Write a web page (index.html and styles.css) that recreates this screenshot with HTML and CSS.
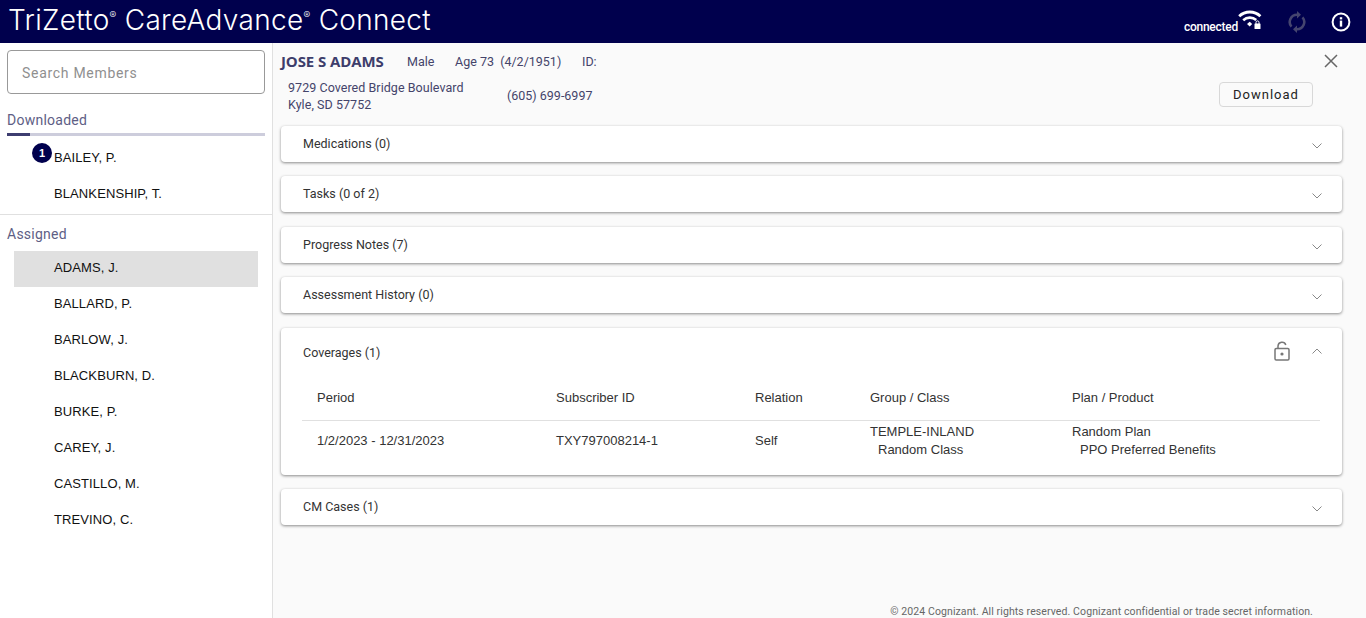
FILE: index.html
```html
<!DOCTYPE html>
<html lang="en">
<head>
  <meta charset="UTF-8">
  <title>TriZetto CareAdvance Connect</title>
  <link rel="stylesheet" href="styles.css">
</head>
<body>
  <header class="topbar">
    <div class="brand">TriZetto<sup>®</sup> CareAdvance<sup>®</sup> Connect</div>
    <div class="status">
      <span class="status-text">connected</span>
      <svg class="wifi" width="24" height="20" viewBox="0 0 24 20">
        <path d="M1.2 7.2C7 1.6 16.6 1.6 22.4 7.2" fill="none" stroke="#fff" stroke-width="2.8"/>
        <path d="M5.2 11.2C9 7.8 14.6 7.8 18.2 11" fill="none" stroke="#fff" stroke-width="2.6"/>
        <path d="M9 15L11.7 12.8L14.2 15L11.7 17.5Z" fill="#fff"/>
        <rect x="16.5" y="14.5" width="6" height="5.5" rx="0.6" fill="#fff"/>
        <path d="M18 15v-1.6a1.5 1.5 0 0 1 3 0V15" fill="none" stroke="#fff" stroke-width="1"/>
      </svg>
    </div>
    <svg class="sync" width="18" height="22" viewBox="0 0 18 22">
      <path d="M9 2.5V0l4 3.8L9 7.5V5a6 6 0 0 0-4.6 9.8L2.6 16.6A8.5 8.5 0 0 1 9 2.5Z" fill="#45456f"/>
      <path d="M9 19.5V22l-4-3.8L9 14.5V17a6 6 0 0 0 4.6-9.8l1.8-1.8A8.5 8.5 0 0 1 9 19.5Z" fill="#45456f"/>
    </svg>
    <svg class="info" width="20" height="20" viewBox="0 0 20 20">
      <circle cx="10" cy="10" r="8.4" fill="none" stroke="#fff" stroke-width="2"/>
      <rect x="8.8" y="8.6" width="2.4" height="6" fill="#fff"/>
      <rect x="8.8" y="5.2" width="2.4" height="2.2" fill="#fff"/>
    </svg>
  </header>

  <div class="layout">
    <aside class="sidebar">
      <div class="search">Search Members</div>
      <div class="tab-label">Downloaded</div>
      <div class="tab-bar"><div class="tab-progress"></div></div>
      <ul class="members">
        <li class="member"><span class="badge">1</span>BAILEY, P.</li>
        <li class="member">BLANKENSHIP, T.</li>
      </ul>
      <div class="divider"></div>
      <div class="group-label">Assigned</div>
      <ul class="members">
        <li class="member selected">ADAMS, J.</li>
        <li class="member">BALLARD, P.</li>
        <li class="member">BARLOW, J.</li>
        <li class="member">BLACKBURN, D.</li>
        <li class="member">BURKE, P.</li>
        <li class="member">CAREY, J.</li>
        <li class="member">CASTILLO, M.</li>
        <li class="member">TREVINO, C.</li>
      </ul>
    </aside>

    <main class="content">
      <div class="patient-top">
        <span class="patient-name">JOSE S ADAMS</span>
        <span class="patient-sex">Male</span>
        <span class="patient-age">Age 73&nbsp; (4/2/1951)</span>
        <span class="patient-id">ID:</span>
        <svg class="close" width="14" height="14" viewBox="0 0 14 14">
          <path d="M1 1L13 13M13 1L1 13" stroke="#666" stroke-width="1.5" fill="none"/>
        </svg>
      </div>
      <div class="patient-bottom">
        <div class="address">9729 Covered Bridge Boulevard<br>Kyle, SD 57752</div>
        <div class="phone">(605) 699-6997</div>
        <button class="download">Download</button>
      </div>

      <section class="card">
        <div class="card-head">Medications (0)<svg class="chev" width="10" height="6" viewBox="0 0 10 6"><path d="M.5.5L5 5 9.5.5" fill="none" stroke="#888"/></svg></div>
      </section>
      <section class="card">
        <div class="card-head">Tasks (0 of 2)<svg class="chev" width="10" height="6" viewBox="0 0 10 6"><path d="M.5.5L5 5 9.5.5" fill="none" stroke="#888"/></svg></div>
      </section>
      <section class="card">
        <div class="card-head">Progress Notes (7)<svg class="chev" width="10" height="6" viewBox="0 0 10 6"><path d="M.5.5L5 5 9.5.5" fill="none" stroke="#888"/></svg></div>
      </section>
      <section class="card">
        <div class="card-head">Assessment History (0)<svg class="chev" width="10" height="6" viewBox="0 0 10 6"><path d="M.5.5L5 5 9.5.5" fill="none" stroke="#888"/></svg></div>
      </section>
      <section class="card">
        <div class="card-head open">
          Coverages (1)
          <svg class="lock" width="16" height="20" viewBox="0 0 16 20">
            <rect x="1" y="7.5" width="14" height="11.5" rx="1.2" fill="none" stroke="#777" stroke-width="1.5"/>
            <path d="M4 7.5V5a4 4 0 0 1 7.8-1" fill="none" stroke="#777" stroke-width="1.5"/>
            <circle cx="8" cy="13" r="1.6" fill="#777"/>
          </svg>
          <svg class="chev up" width="10" height="6" viewBox="0 0 10 6"><path d="M.5 5.5L5 1l4.5 4.5" fill="none" stroke="#888"/></svg>
        </div>
        <div class="cov-table">
          <div class="cov-row cov-header">
            <div class="c1">Period</div>
            <div class="c2">Subscriber ID</div>
            <div class="c3">Relation</div>
            <div class="c4">Group / Class</div>
            <div class="c5">Plan / Product</div>
          </div>
          <div class="cov-row cov-data">
            <div class="c1">1/2/2023 - 12/31/2023</div>
            <div class="c2">TXY797008214-1</div>
            <div class="c3">Self</div>
            <div class="c4">TEMPLE-INLAND<br><span class="sub">Random Class</span></div>
            <div class="c5">Random Plan<br><span class="sub">PPO Preferred Benefits</span></div>
          </div>
        </div>
      </section>
      <section class="card">
        <div class="card-head">CM Cases (1)<svg class="chev" width="10" height="6" viewBox="0 0 10 6"><path d="M.5.5L5 5 9.5.5" fill="none" stroke="#888"/></svg></div>
      </section>

      <footer class="copyright">© 2024 Cognizant. All rights reserved. Cognizant confidential or trade secret information.</footer>
    </main>
  </div>
</body>
</html>
```

FILE: styles.css
```css
* {
  box-sizing: border-box;
}
html, body {
  height: 100%;
}
body {
  margin: 0;
  overflow: hidden;
  font-family: Roboto, "Liberation Sans", sans-serif;
  font-size: 14px;
  color: #333;
  background: #fff;
}
ul {
  list-style: none;
  margin: 0;
  padding: 0;
}

/* top bar */
.topbar {
  height: 43px;
  background: #00004d;
  display: flex;
  align-items: center;
  color: #fff;
  padding: 0 15px 0 8px;
}
.brand {
  font-family: Inter, sans-serif;
  font-weight: 300;
  font-size: 28px;
  letter-spacing: 0.3px;
  white-space: nowrap;
  margin-top: -3px;
}
.brand sup {
  font-size: 10px;
  line-height: 0;
  vertical-align: 11px;
}
.status {
  margin-left: auto;
  display: flex;
  align-items: flex-start;
  margin-right: 26px;
}
.status-text {
  font-size: 12px;
  font-weight: 500;
  letter-spacing: -0.25px;
  margin-top: 11px;
}
.wifi {
  margin-bottom: 6px;
}
.sync {
  margin-right: 25px;
}

/* left column */
.layout {
  display: flex;
  height: 575px;
}
.sidebar {
  width: 273px;
  flex: none;
  border-right: 1px solid #e0e0e0;
  padding-top: 7px;
  background: #fff;
}
.search {
  margin: 0 7px;
  height: 44px;
  border: 1px solid #999;
  border-radius: 4px;
  padding: 0 14px;
  line-height: 45px;
  color: #8f8f8f;
  letter-spacing: 0.7px;
}
.tab-label {
  margin: 18px 7px 0;
  line-height: 16px;
  color: #5e5e85;
  letter-spacing: 0.25px;
}
.tab-bar {
  margin: 5px 7px 0;
  height: 3px;
  background: #cdcddc;
}
.tab-progress {
  width: 23px;
  height: 3px;
  background: #3d3d70;
}
.members {
  padding-top: 4px;
}
.member {
  position: relative;
  height: 36px;
  line-height: 36px;
  margin: 0 14px;
  padding-left: 40px;
  font-family: "Liberation Sans", sans-serif;
  font-size: 13px;
  letter-spacing: 0.1px;
  color: #111;
}
.member.selected {
  background: #e0e0e0;
}
.badge {
  position: absolute;
  left: 18px;
  top: 3px;
  width: 20px;
  height: 20px;
  border-radius: 50%;
  background: #00004d;
  color: #fff;
  font-size: 11px;
  font-weight: 700;
  line-height: 20px;
  text-align: center;
}
.divider {
  margin-top: 2px;
  height: 1px;
  background: #e0e0e0;
}
.group-label {
  margin: 11px 7px 0;
  line-height: 16px;
  color: #5e5e85;
  letter-spacing: 0.25px;
}
.group-label + .members {
  padding-top: 9px;
}
.group-label + .members .member {
  line-height: 34px;
}

/* right column */
.content {
  flex: 1;
  display: flex;
  flex-direction: column;
  background: #fafafa;
  padding: 0 24px 0 8px;
}
.patient-top {
  display: flex;
  align-items: center;
  height: 36px;
  font-size: 12.5px;
  color: #44446a;
}
.patient-name {
  font-family: "Open Sans", sans-serif;
  font-weight: 700;
  font-size: 15px;
  color: #3d3d6b;
  letter-spacing: -0.1px;
  width: 126px;
}
.patient-sex {
  width: 48px;
}
.patient-age {
  width: 127px;
}
.close {
  margin-left: auto;
  margin-right: 4px;
  margin-top: -1px;
}
.patient-bottom {
  display: flex;
  font-size: 12.5px;
  color: #44446a;
  height: 47px;
  padding-left: 7px;
  line-height: 17px;
}
.address {
  width: 219px;
  letter-spacing: 0.05px;
}
.phone {
  padding-top: 8px;
}
.download {
  margin-left: auto;
  margin-right: 29px;
  margin-top: 3px;
  width: 94px;
  height: 25px;
  background: #fafafa;
  border: 1px solid #d8d8d8;
  border-radius: 4px;
  font-family: Roboto, sans-serif;
  font-size: 13px;
  color: #222;
  letter-spacing: 1px;
  padding: 0;
}
.card {
  flex: none;
  margin-bottom: 14.4px;
  background: #fff;
  border-radius: 4px;
  box-shadow: 0 1px 3px rgba(0, 0, 0, 0.45);
}
.card-head {
  height: 36px;
  display: flex;
  align-items: center;
  padding: 0 20px 1px 22px;
  font-size: 12.5px;
  color: #333;
}
.card-head.open {
  height: 49px;
  padding-bottom: 0;
}
.chev {
  margin-left: auto;
  margin-top: 5px;
}
.chev.up {
  margin-left: 23px;
  margin-top: -3px;
}
.lock {
  margin-left: auto;
  margin-right: -1px;
  margin-top: -2px;
}
.cov-table {
  margin: 0 22px 0 21px;
  height: 98px;
  font-family: "Liberation Sans", sans-serif;
  font-size: 13px;
  color: #333;
}
.cov-row {
  display: flex;
  align-items: center;
  padding-left: 15px;
}
.cov-header {
  height: 44px;
  padding-bottom: 2px;
  border-bottom: 1px solid #e0e0e0;
}
.cov-data {
  height: 38px;
  padding-top: 2px;
  line-height: 18px;
}
.c1 { width: 239px; }
.c2 { width: 199px; }
.c3 { width: 115px; }
.c4 { width: 202px; }
.sub {
  margin-left: 8px;
}
.copyright {
  margin-top: auto;
  text-align: right;
  font-size: 10.5px;
  color: #666;
  letter-spacing: 0.1px;
  padding-right: 29px;
  line-height: 13px;
}
```
